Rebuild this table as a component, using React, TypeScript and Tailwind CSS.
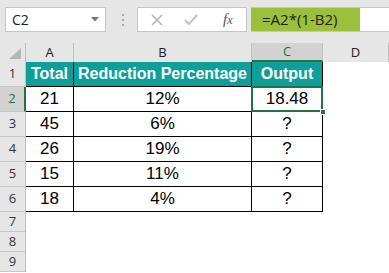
const cols = [
  { key: "A", w: "w-[48px]" },
  { key: "B", w: "w-[178px]" },
  { key: "C", w: "w-[71px]" },
];

const rows = [
  ["21", "12%", "18.48"],
  ["45", "6%", "?"],
  ["26", "19%", "?"],
  ["15", "11%", "?"],
  ["18", "4%", "?"],
];

function FormulaBar() {
  return (
    <div className="h-[43px] bg-[#e6e6e6] flex items-start pt-[7px] font-['Open_Sans',sans-serif]">
      {/* name box */}
      <div className="ml-[5px] w-[101px] h-[25px] bg-white border border-[#c6c6c6] flex items-center justify-between pl-[6px] pr-[6px]">
        <span className="text-[14px] text-[#222] leading-none">C2</span>
        <svg width="8" height="5" viewBox="0 0 8 5">
          <path d="M0 0 L8 0 L4 4.5 Z" fill="#777" />
        </svg>
      </div>
      {/* splitter dots */}
      <div className="ml-[15px] w-[3px] h-[25px] flex flex-col items-center justify-center gap-[3px]">
        <span className="w-[2px] h-[2px] bg-[#a8a8a8]" />
        <span className="w-[2px] h-[2px] bg-[#a8a8a8]" />
        <span className="w-[2px] h-[2px] bg-[#a8a8a8]" />
      </div>
      {/* cancel / enter / fx */}
      <div className="ml-[13px] w-[110px] h-[25px] bg-white border border-[#c6c6c6] flex items-center">
        <svg className="ml-[13px]" width="12" height="12" viewBox="0 0 12 12">
          <path d="M1 1 L11 11 M11 1 L1 11" stroke="#b4b4b4" strokeWidth="1.6" fill="none" />
        </svg>
        <svg className="ml-[21px]" width="14" height="11" viewBox="0 0 14 11">
          <path d="M1 6 L5 10 L13 1" stroke="#c2c2c2" strokeWidth="2" fill="none" />
        </svg>
        <span className="ml-[25px] text-[15px] italic text-[#555] font-['Liberation_Serif',serif] leading-none">
          f<span className="text-[12px]">x</span>
        </span>
      </div>
      {/* formula input */}
      <div className="ml-[4px] flex-1 h-[25px] bg-white border-y border-[#c6c6c6] flex">
        <div className="w-[109px] h-full bg-[#9dc03c] flex items-center pl-[11px]">
          <span className="text-[15px] text-[#222] leading-none">=A2*(1-B2)</span>
        </div>
      </div>
    </div>
  );
}

function ColumnHeaders() {
  return (
    <div className="h-[19px] flex bg-[#e6e6e6] font-['Open_Sans',sans-serif] text-[13px] text-[#222]">
      <div className="w-[26px] border-r border-[#c0c0c0] flex items-end justify-end pr-[4px] pb-[3px]">
        <svg width="12" height="11" viewBox="0 0 12 11">
          <path d="M12 0 L12 11 L0 11 Z" fill="#b6b6b6" />
        </svg>
      </div>
      {cols.map((c) =>
        c.key === "C" ? (
          <div
            key={c.key}
            className={`${c.w} bg-[#d2d2d2] border-r border-[#c0c0c0] border-b-2 border-b-[#217346] flex items-center justify-center text-[#217346]`}
          >
            {c.key}
          </div>
        ) : (
          <div key={c.key} className={`${c.w} border-r border-[#c0c0c0] flex items-center justify-center`}>
            {c.key}
          </div>
        )
      )}
      <div className="w-[66px] border-r border-[#c0c0c0] flex items-center justify-center">D</div>
    </div>
  );
}

function RowHead({ n, tall, active }: { n: number; tall: boolean; active?: boolean }) {
  return (
    <div
      className={`w-[26px] shrink-0 ${tall ? "h-[25px]" : "h-[20px]"} ${
        active ? "bg-[#d2d2d2] border-r-2 border-r-[#217346]" : "bg-[#e6e6e6] border-r border-r-[#c0c0c0]"
      } border-b border-b-[#c6c6c6] flex items-center justify-center font-['Open_Sans',sans-serif] text-[13px] ${
        active ? "text-[#217346]" : "text-[#333]"
      }`}
    >
      {n}
    </div>
  );
}

export default function App() {
  return (
    <div className="w-[389px] h-[273px] overflow-hidden bg-white">
      <FormulaBar />
      <ColumnHeaders />

      {/* header row */}
      <div className="flex">
        <RowHead n={1} tall />
        {["Total", "Reduction Percentage", "Output"].map((t, i) => (
          <div
            key={t}
            className={`${cols[i].w} h-[25px] bg-[#0f9f9a] border-r border-b border-black flex items-center justify-center text-white font-bold text-[16px] font-['Liberation_Sans',sans-serif]`}
          >
            {t}
          </div>
        ))}
      </div>

      {/* data rows */}
      {rows.map((r, ri) => (
        <div key={ri} className="flex">
          <RowHead n={ri + 2} tall active={ri === 0} />
          {r.map((v, ci) => (
            <div
              key={ci}
              className={`${cols[ci].w} h-[25px] border-r border-b border-black flex items-center justify-center text-black text-[17px] font-['Liberation_Sans',sans-serif] ${
                ri === 0 && ci === 2 ? "relative" : ""
              }`}
            >
              {v}
              {ri === 0 && ci === 2 && (
                <>
                  <div className="absolute -left-[1px] -top-[1px] -right-[1px] -bottom-[1px] border-2 border-[#217346]" />
                  <div className="absolute -right-[4px] -bottom-[4px] w-[6px] h-[6px] bg-[#217346] border border-white" />
                </>
              )}
            </div>
          ))}
        </div>
      ))}

      {/* empty rows */}
      {[7, 8, 9].map((n) => (
        <div key={n} className="flex">
          <RowHead n={n} tall={false} />
        </div>
      ))}
    </div>
  );
}
